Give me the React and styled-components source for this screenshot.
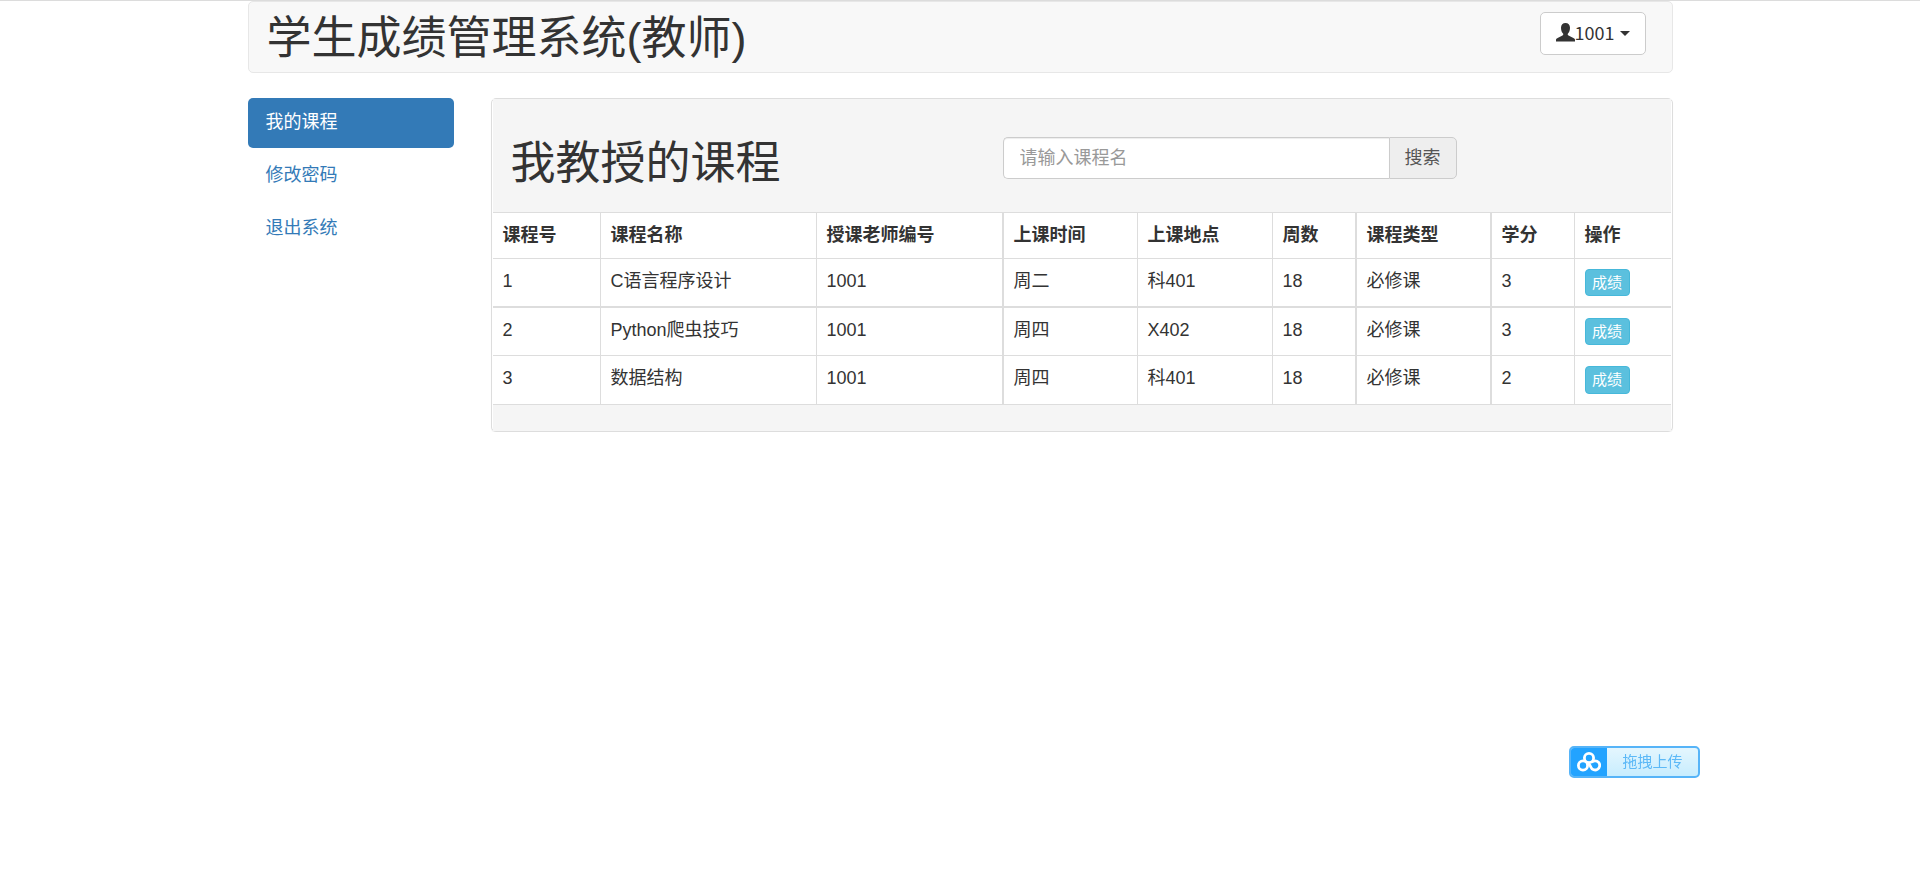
import React, { useState } from 'react';
import styled, { createGlobalStyle } from 'styled-components'

const GlobalStyle = createGlobalStyle`
* {
  box-sizing: border-box;
}
body {
  margin: 0;
  border-top: 1px solid #dcdcdc;
  background: #fff;
  color: #333;
  font-family: "Liberation Sans", Arial, "Noto Sans CJK SC", sans-serif;
  font-size: 18px;
  line-height: 25px;
}
button, input {
  font-family: inherit;
}`

const Container = styled.div`
  max-width: 1463px;
  margin: 0 auto;
  padding: 0 19px;
`

const Navbar = styled.header`
  display: flex;
  justify-content: space-between;
  align-items: flex-start;
  height: 72px;
  margin-bottom: 25px;
  padding: 10px 26px 0 18px;
  border: 1px solid #e7e7e7;
  border-radius: 5px;
  background: #f8f8f8;
`

const Title = styled.h1`
  margin: 0;
  font-size: 45px;
  font-weight: 400;
  line-height: 54px;
`

const UserButton = styled.button`
  display: flex;
  align-items: center;
  height: 43px;
  padding: 0 15px;
  border: 1px solid #ccc;
  border-radius: 5px;
  background: #fff;
  color: #333;
  font-family: "Noto Sans CJK SC", sans-serif;
  font-size: 18px;
  cursor: pointer;
`

const UserName = styled.span`
  padding-bottom: 4px;
`

const Caret = styled.span`
  margin-left: 5px;
  border-top: 5px solid #333;
  border-left: 5px solid transparent;
  border-right: 5px solid transparent;
`

const Main = styled.main`
  display: grid;
  grid-template-columns: minmax(0, 206fr) minmax(0, 1182fr);
  gap: 37px;
  align-items: start;
`

const Menu = styled.nav`
  display: flex;
  flex-direction: column;
  gap: 3px;
`

const MenuLink = styled.a`
  padding: 12px 18px 13px;
  border-radius: 5px;
  background: ${p => p.$active ? '#337ab7' : 'transparent'};
  color: ${p => p.$active ? '#fff' : '#337ab7'};
  text-decoration: none;
`

const Panel = styled.section`
  padding: 0 1px;
  border: 1px solid #ddd;
  border-radius: 5px;
  background: #fff;
  box-shadow: 0 1px 1px rgba(0, 0, 0, .05);
`

const PanelHeading = styled.div`
  display: grid;
  grid-template-columns: minmax(0, 492fr) minmax(0, 454fr) minmax(0, 195fr);
  align-items: start;
  height: 113px;
  padding: 38px 19px 0 18px;
  background: #f5f5f5;
`

const Search = styled.form`
  display: flex;
  height: 42px;
`

const Input = styled.input`
  flex: 1;
  min-width: 0;
  padding: 0 16px;
  border: 1px solid #ccc;
  border-right: 0;
  border-radius: 5px 0 0 5px;
  background: #fff;
  box-shadow: inset 0 1px 1px rgba(0, 0, 0, .075);
  color: #555;
  font-size: 18px;
  &::placeholder {
    color: #999;
    opacity: 1;
  }
`

const SearchButton = styled.button`
  padding: 0 15px 4px;
  border: 1px solid #ccc;
  border-radius: 0 5px 5px 0;
  background: #eee;
  color: #555;
  font-size: 18px;
`

const Table = styled.table`
  width: 100%;
  table-layout: fixed;
  border-collapse: separate;
  border-spacing: 0;
  border-top: 1px solid #ddd;
`

const Col = styled.col`
  width: ${p => p.$width}px;
`

const cell = `
  padding: 10px;
  border-bottom: 1px solid #ddd;
  text-align: left;
  vertical-align: top;
`

const HeaderCell = styled.th`
  ${cell}
  border-right: ${p => p.$line}px solid #ddd;
  font-weight: 700;
`

const DataCell = styled.td`
  ${cell}
  border-right: ${p => p.$line}px solid #ddd;
  tr:first-child > & {
    border-bottom-width: 2px;
  }
`

const ScoreButton = styled.button`
  display: block;
  min-width: 45px;
  height: 27px;
  padding: 0 6px;
  border: 1px solid #46b8da;
  border-radius: 4px;
  background: #5bc0de;
  color: #fff;
  font-size: 15px;
  line-height: 22px;
  tr:last-child > td > & {
    height: 28px;
  }
`

const PanelFooter = styled.div`
  height: 26px;
  background: #f5f5f5;
`

const UploadButton = styled.button`
  position: fixed;
  right: 220px;
  bottom: 94px;
  display: flex;
  width: 131px;
  height: 32px;
  padding: 0;
  overflow: hidden;
  border: 2px solid #56b4f8;
  border-radius: 5px;
  background: linear-gradient(#e4f6fe, #c8edfe);
  color: #5db9f7;
  font-size: 15px;
  line-height: 28px;
`

const UploadIcon = styled.span`
  display: flex;
  align-items: center;
  justify-content: center;
  width: 36px;
  height: 28px;
  background: #22a3ff;
`

const UploadText = styled.span`
  flex: 1;
`

const menu = ['我的课程', '修改密码', '退出系统']

const columns = [
  { key: 'id', name: '课程号', width: 108, line: 1 },
  { key: 'title', name: '课程名称', width: 216, line: 1 },
  { key: 'teacher', name: '授课老师编号', width: 187, line: 2 },
  { key: 'time', name: '上课时间', width: 134, line: 1 },
  { key: 'place', name: '上课地点', width: 135, line: 1 },
  { key: 'weeks', name: '周数', width: 84, line: 2 },
  { key: 'type', name: '课程类型', width: 135, line: 2 },
  { key: 'credit', name: '学分', width: 83, line: 1 },
  { key: 'action', name: '操作', width: 96, line: 0 }
]

const courses = [
  { id: 1, title: 'C语言程序设计', teacher: '1001', time: '周二', place: '科401', weeks: 18, type: '必修课', credit: 3 },
  { id: 2, title: 'Python爬虫技巧', teacher: '1001', time: '周四', place: 'X402', weeks: 18, type: '必修课', credit: 3 },
  { id: 3, title: '数据结构', teacher: '1001', time: '周四', place: '科401', weeks: 18, type: '必修课', credit: 2 }
]

function UserIcon() {
  return (
    <svg width="19" height="22" viewBox="0 0 19 22" fill="#333" aria-hidden="true">
      <path d="M9.500 0C6.800 0 5 1.800 5 4.800c0 2.600.8 4.600 2 5.800.5.600.4 1.500-.5 2L1.600 15C.5 15.600 0 16 0 17v1.500h19V17c0-1-.5-1.400-1.600-2l-4.900-2.400c-.9-.5-1-1.400-.5-2 1.200-1.200 2-3.200 2-5.800C14 1.800 12.200 0 9.500 0z" />
    </svg>
  )
}

function CloudIcon() {
  return (
    <svg width="24" height="20" viewBox="0 0 24 20" fill="none" stroke="#fff" strokeWidth="2.800" aria-hidden="true">
      <circle cx="12" cy="6" r="4.600" />
      <circle cx="6" cy="13.500" r="4.600" />
      <path d="M10 10.500c2 .5 2.800 2 3.800 4.500a4.600 4.600 0 1 0 .8-4.600" />
    </svg>
  )
}

function App() {
  const [active, setActive] = useState(menu[0])
  const [keyword, setKeyword] = useState('')
  const [rows, setRows] = useState(courses)

  function search(e) {
    e.preventDefault()
    setRows(courses.filter(x => x.title.includes(keyword)))
  }

  return (
    <>
      <GlobalStyle />
      <Container>
        <Navbar>
          <Title>学生成绩管理系统(教师)</Title>
          <UserButton type="button">
            <UserIcon />
            <UserName>1001</UserName>
            <Caret />
          </UserButton>
        </Navbar>

        <Main>
          <Menu>
            {menu.map(x => (
              <MenuLink key={x} href="#" $active={x === active} onClick={() => setActive(x)}>{x}</MenuLink>
            ))}
          </Menu>

          <Panel>
            <PanelHeading>
              <Title as="h2">我教授的课程</Title>
              <Search onSubmit={search}>
                <Input
                  aria-label="课程名"
                  placeholder="请输入课程名"
                  value={keyword}
                  onChange={e => setKeyword(e.target.value)}
                />
                <SearchButton type="submit">搜索</SearchButton>
              </Search>
            </PanelHeading>

            <Table>
              <colgroup>
                {columns.map(c => <Col key={c.key} $width={c.width} />)}
              </colgroup>
              <thead>
                <tr>
                  {columns.map(c => <HeaderCell key={c.key} $line={c.line}>{c.name}</HeaderCell>)}
                </tr>
              </thead>
              <tbody>
                {rows.map(row => (
                  <tr key={row.id}>
                    {columns.map(c => (
                      <DataCell key={c.key} $line={c.line}>
                        {c.key === 'action' ? <ScoreButton type="button">成绩</ScoreButton> : row[c.key]}
                      </DataCell>
                    ))}
                  </tr>
                ))}
              </tbody>
            </Table>
            <PanelFooter />
          </Panel>
        </Main>
      </Container>

      <UploadButton type="button">
        <UploadIcon><CloudIcon /></UploadIcon>
        <UploadText>拖拽上传</UploadText>
      </UploadButton>
    </>
  );
}

export default App;
